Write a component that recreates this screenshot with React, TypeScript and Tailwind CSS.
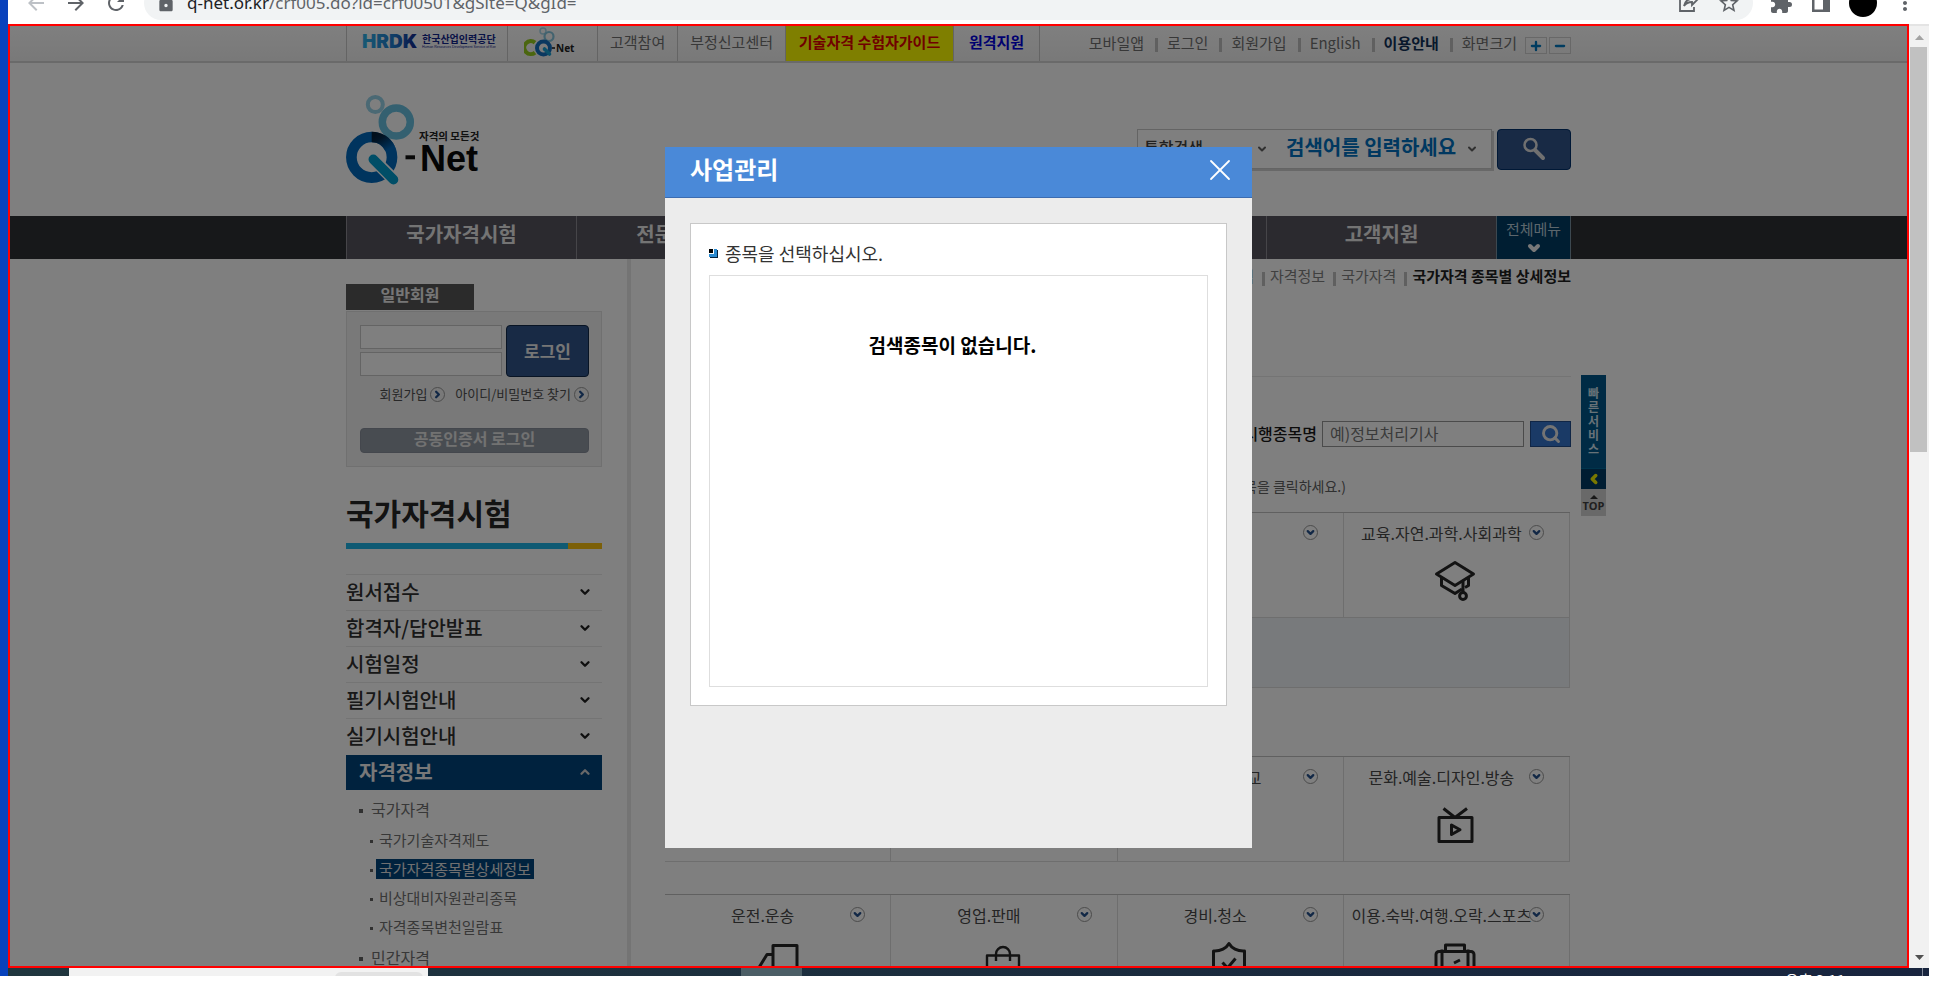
import type { ReactNode } from "react";
import { ChevronDown, ChevronLeft, ChevronRight, ChevronUp, Minus, Plus, Search, X } from "lucide-react";
import {
  MdArrowBack,
  MdArrowForward,
  MdExtension,
  MdLock,
  MdMoreVert,
  MdRefresh,
  MdStarBorder,
} from "react-icons/md";

const topMenu = ["고객참여", "부정신고센터"];
const utilLinks = ["모바일앱", "로그인", "회원가입", "English", "이용안내", "화면크기"];
const mainNav = ["국가자격시험", "전문자격시험", "과정평가형", "일학습병행", "고객지원"];
const sideMenu = ["원서접수", "합격자/답안발표", "시험일정", "필기시험안내", "실기시험안내"];
const subMenu = ["국가기술자격제도", "국가자격종목별상세정보", "비상대비자원관리종목", "자격종목변천일람표"];

function HrdkLogo() {
  return (
    <svg width="134" height="32" viewBox="0 0 134 32" role="img" aria-label="HRDK 한국산업인력공단">
      <defs>
        <linearGradient id="hrdk" x1="0" x2="1">
          <stop offset="0" stopColor="#2fb4ea" />
          <stop offset="0.6" stopColor="#1f78cc" />
          <stop offset="1" stopColor="#10248c" />
        </linearGradient>
      </defs>
      <text x="0" y="20" fontFamily="Inter" fontWeight="900" fontSize="19" fill="url(#hrdk)">
        HRDK
      </text>
      <text x="60" y="15" fontFamily="Noto Sans CJK KR" fontWeight="700" fontSize="10" fill="#10248c">
        한국산업인력공단
      </text>
      <text x="60" y="20" fontFamily="Liberation Sans" fontSize="3.5" fill="#10248c">
        Human Resources Development Service of Korea
      </text>
    </svg>
  );
}

function CqNetLogo() {
  return (
    <svg width="52" height="34" viewBox="0 0 52 34" role="img" aria-label="CQ-Net">
      <circle cx="19" cy="4" r="3" fill="none" stroke="#a8d6e8" strokeWidth="1.5" />
      <circle cx="25" cy="9.500" r="4.500" fill="none" stroke="#86c6de" strokeWidth="2.2" />
      <circle cx="19.500" cy="21" r="6.500" fill="none" stroke="#1470c0" strokeWidth="4" />
      <path d="M11 15.600A6.500 6.500 0 1 0 11 25.600" fill="none" stroke="#96cc1e" strokeWidth="4" />
      <path d="M20.500 22L25.500 27" stroke="#18a0d2" strokeWidth="3.6" strokeLinecap="round" />
      <path d="M28 21h3" stroke="#222" strokeWidth="1.6" />
      <text x="32" y="25" fontFamily="Noto Sans" fontWeight="700" fontSize="10" fill="#222">
        Net
      </text>
    </svg>
  );
}

function QNetLogo() {
  return (
    <svg width="136" height="92" viewBox="0 0 136 92" role="img" aria-label="자격의 모든것 Q-Net">
      <defs>
        <linearGradient id="q-shade" x1="0" x2="1" y1="0" y2="1">
          <stop offset="0" stopColor="#021e36" />
          <stop offset="0.3" stopColor="#02284a" />
          <stop offset="1" stopColor="#0068bc" />
        </linearGradient>
      </defs>
      <circle cx="29.300" cy="9.500" r="7.500" fill="none" stroke="#96d2e8" strokeWidth="4" />
      <circle cx="50.300" cy="27" r="14" fill="none" stroke="#68c0e0" strokeWidth="7.500" />
      <circle cx="25.700" cy="62.300" r="20.300" fill="none" stroke="#0068bc" strokeWidth="10.700" />
      <path d="M25.700 42A20.300 20.300 0 0 1 44 53.500" fill="none" stroke="url(#q-shade)" strokeWidth="10.700" />
      <path d="M27.300 64.300L48 84.700" stroke="#fff" strokeWidth="12.500" strokeLinecap="round" />
      <path d="M27.300 64.300L47.500 84.700" stroke="#009cce" strokeWidth="9.600" strokeLinecap="round" />
      <path d="M59.500 62.300h9.500" stroke="#111" strokeWidth="4" />
      <text x="73" y="45" fontFamily="Noto Sans CJK KR" fontWeight="700" fontSize="10.500" fill="#222">
        자격의 모든것
      </text>
      <text x="74" y="76" fontFamily="Liberation Sans" fontWeight="700" fontSize="36" fill="#080808">
        Net
      </text>
    </svg>
  );
}

function LineIcon({ children }: { children: ReactNode }) {
  return (
    <svg
      width="44"
      height="44"
      viewBox="0 0 44 44"
      fill="none"
      stroke="#262626"
      strokeWidth="3"
      strokeLinejoin="round"
      aria-hidden="true"
    >
      {children}
    </svg>
  );
}

const capIcon = (
  <LineIcon>
    <path d="M22 3.500L40.500 15 22 26.500 3.500 15z" />
    <path d="M8.500 18.500v8L22 34.500l7-4.500M35.500 18.500v8l-3.500 2" />
    <path d="M30 21v12.500" />
    <circle cx="30" cy="37" r="3.400" />
  </LineIcon>
);
const tvIcon = (
  <LineIcon>
    <path d="M6 14.500h33v24H6zM10.500 5.500L22 14.500 34 5.500M18.500 22v9.500l8.500-4.700z" />
  </LineIcon>
);
const truckIcon = (
  <LineIcon>
    <path d="M18 4.500h24v24H18zM18 13.500h-6l-8 13v12h13M42 28.500v9H24" />
  </LineIcon>
);
const bagIcon = (
  <LineIcon>
    <path d="M6 14.500h32v24H6zM15 20V13a7 7 0 0 1 14 0v7" strokeWidth="2.400" />
  </LineIcon>
);
const shieldIcon = (
  <LineIcon>
    <path d="M22 2.500c2.500 4.500 8.500 8 15.500 7.500v15c0 7-8 11-15.500 15C14.500 36 6.500 32 6.500 25V10C13.500 10.500 19.500 7 22 2.500zM15.500 21.500l5 5.500 8-9.500" />
  </LineIcon>
);
const caseIcon = (
  <LineIcon>
    <path d="M12.500 10V4h19v6M3 13.500a3 3 0 0 1 3-3h32a3 3 0 0 1 3 3v26H3zM9 8.500v31M35 8.500v31M21 22l6-3M18 30l5-4" />
  </LineIcon>
);

const groups: { items: { name: string; icon: ReactNode }[]; open?: boolean; className: string }[] = [
  {
    open: true,
    className: "mt-[15px]",
    items: [
      { name: "사업관리", icon: null },
      { name: "경영.회계", icon: null },
      { name: "금융.보험", icon: null },
      { name: "교육.자연.과학.사회과학", icon: capIcon },
    ],
  },
  {
    className: "mt-[68px]",
    items: [
      { name: "법률.국방", icon: null },
      { name: "보건.의료", icon: null },
      { name: "사회복지.종교", icon: null },
      { name: "문화.예술.디자인.방송", icon: tvIcon },
    ],
  },
  {
    className: "mt-8",
    items: [
      { name: "운전.운송", icon: truckIcon },
      { name: "영업.판매", icon: bagIcon },
      { name: "경비.청소", icon: shieldIcon },
      { name: "이용.숙박.여행.오락.스포츠", icon: caseIcon },
    ],
  },
];

function Bar() {
  return <span className="h-[14px] w-[3px] bg-[#c0c0c0]" aria-hidden="true" />;
}

function BrowserBar() {
  return (
    <div className="flex h-6 shrink-0 items-end gap-4 overflow-hidden bg-white pr-3 pb-1 pl-4 text-[#5f6368]">
      <button aria-label="뒤로" className="flex h-[34px] items-center text-[#bdc1c6]">
        <MdArrowBack size={24} />
      </button>
      <button aria-label="앞으로" className="flex h-[34px] items-center">
        <MdArrowForward size={24} />
      </button>
      <button aria-label="새로고침" className="flex h-[34px] items-center">
        <MdRefresh size={24} />
      </button>
      <div className="flex h-[34px] flex-1 items-center gap-[11px] rounded-full bg-[#f1f3f4] px-3">
        <MdLock size={20} />
        <span className="flex-1 font-['Noto_Sans'] text-[17px] leading-6 text-[#5f6368]">
          <span className="text-[#202124]">q-net.or.kr</span>/crf005.do?id=crf00501&amp;gSite=Q&amp;gId=
        </span>
        <button aria-label="공유" className="mr-[7px]">
          <svg width="22" height="22" viewBox="0 0 22 22" fill="none" stroke="currentColor" strokeWidth="1.800">
            <path d="M8 4H3v15h14v-4M7 14c1-5 4-7 8-7V3l5 5-5 5V10c-4 0-6 1-8 4z" />
          </svg>
        </button>
        <button aria-label="북마크">
          <MdStarBorder size={24} />
        </button>
      </div>
      <button aria-label="확장 프로그램" className="flex h-[34px] items-center">
        <MdExtension size={24} />
      </button>
      <button aria-label="사이드 패널" className="flex h-[34px] items-center">
        <svg width="24" height="24" viewBox="0 0 24 24" fill="currentColor">
          <path d="M3 3h18v18H3zM5.500 5.500v13H14v-13z" fillRule="evenodd" />
        </svg>
      </button>
      <span className="flex h-[34px] items-center">
        <span className="size-7 rounded-full bg-black" />
      </span>
      <button aria-label="메뉴" className="flex h-[34px] items-center">
        <MdMoreVert size={24} />
      </button>
    </div>
  );
}

function TopBar() {
  return (
    <div className="border-b-2 border-[#d4d4d4] bg-linear-to-b from-white to-[#f2f2f2] text-[15px] leading-5 text-[#707070]">
      <div className="mx-auto flex h-[35px] max-w-[1225px] items-stretch">
        <a href="#hrdk" className="flex w-[161px] items-center border-l border-[#c8c8c8] pl-[15px]">
          <HrdkLogo />
        </a>
        <a href="#cq" className="flex w-[90px] items-center border-l border-[#c8c8c8] pl-4">
          <CqNetLogo />
        </a>
        {topMenu.map((t) => (
          <a key={t} href="#menu" className="border-l border-[#c8c8c8] px-3 pt-1.5">
            {t}
          </a>
        ))}
        <a
          href="#guide"
          className="w-[168px] border-l border-[#c8c8c8] bg-[#ffff00] pt-1.5 text-center font-bold text-[#e00000]"
        >
          기술자격 수험자가이드
        </a>
        <a
          href="#remote"
          className="w-[87px] border-x border-[#c8c8c8] pt-1.5 text-center font-bold text-[#0000e0]"
        >
          원격지원
        </a>
        <div className="ml-auto flex items-center pb-0.5">
          {utilLinks.map((t, i) => (
            <span key={t} className="flex items-center">
              {i > 0 && (
                <span className="mt-1 mr-[9px] ml-[11px] flex">
                  <Bar />
                </span>
              )}
              <a href="#util" className={t === "이용안내" ? "font-bold text-[#103058]" : ""}>
                {t}
              </a>
            </span>
          ))}
          <button
            aria-label="크게"
            className="mt-1.5 ml-2 flex h-[17px] w-[22px] items-center justify-center border border-[#d0d0d0] text-[#0078c0]"
          >
            <Plus size={14} strokeWidth={4} />
          </button>
          <button
            aria-label="작게"
            className="mt-1.5 ml-0.5 flex h-[17px] w-[22px] items-center justify-center border border-[#d0d0d0] text-[#0078c0]"
          >
            <Minus size={14} strokeWidth={4} />
          </button>
        </div>
      </div>
    </div>
  );
}

function Header() {
  return (
    <header>
      <div className="mx-auto flex h-[153px] max-w-[1225px] justify-between">
        <a href="#home" className="pt-8">
          <QNetLogo />
        </a>
        <form className="flex gap-[5px] pt-[66px]">
          <div className="flex h-10 w-[355px] items-center border border-[#c8c8c8] shadow-[2px_2px_0_#d0d0d0]">
            <div className="relative flex w-[142px] items-center">
              <select
                aria-label="검색 구분"
                className="w-full appearance-none bg-transparent pb-1 pl-1.5 text-base leading-6 font-medium text-[#404040]"
              >
                <option>통합검색</option>
              </select>
              <ChevronDown size={12} strokeWidth={4} className="absolute top-2 right-3 text-[#606060]" />
            </div>
            <input
              aria-label="검색어"
              placeholder="검색어를 입력하세요"
              className="w-[184px] pb-1 pl-1.5 text-xl leading-7 font-bold placeholder:text-[#0070c0]"
            />
            <ChevronDown size={12} strokeWidth={4} className="ml-0.5 text-[#606060]" />
          </div>
          <button
            type="button"
            aria-label="검색"
            className="flex h-[41px] w-[74px] items-center justify-center rounded-sm border border-[#00306c] bg-[#30548a] pb-0.5 text-[#e0e0e0]"
          >
            <svg width="26" height="26" viewBox="0 0 26 26" fill="none" stroke="currentColor" strokeLinecap="round">
              <circle cx="9.500" cy="9" r="6" strokeWidth="2.500" />
              <path d="M14.500 14.500L22 22" strokeWidth="4" />
            </svg>
          </button>
        </form>
      </div>
      <nav className="bg-[#2e3034]">
        <div className="mx-auto flex h-[43px] max-w-[1225px]">
          {mainNav.map((t) => (
            <a
              key={t}
              href="#nav"
              className="w-[230px] border-l border-[#8c8a92] bg-[#56545f] pt-1 text-center text-xl leading-7 font-bold text-[#e8e8e8]"
            >
              {t}
            </a>
          ))}
          <button className="flex flex-1 flex-col items-center border-x border-[#7890a0] bg-[#003c64] pt-px text-[15px] leading-[23px] text-[#b8ccd8]">
            전체메뉴
            <ChevronDown size={16} strokeWidth={6} className="text-[#f0f0f0]" />
          </button>
        </div>
      </nav>
    </header>
  );
}

function RoundArrow({ down }: { down?: boolean }) {
  return (
    <span className="flex size-[15px] shrink-0 items-center justify-center rounded-full border border-[#989898] text-[#24508c]">
      {down ? <ChevronDown size={11} strokeWidth={5} /> : <ChevronRight size={11} strokeWidth={5} />}
    </span>
  );
}

function Sidebar() {
  return (
    <aside className="w-[285px] shrink-0 border-r-4 border-[#e8e8e8] pt-[25px] pr-[25px]">
      <h2 className="h-[26px] w-32 bg-[#565656] text-center text-base leading-5 font-bold text-[#ededed]">
        일반회원
      </h2>
      <form className="mt-px h-[156px] border border-[#e0e0e0] bg-[#f2f2f2] pt-[13px] pr-3 pl-[13px]">
        <div className="flex gap-1">
          <div className="flex flex-1 flex-col gap-[3px]">
            <input aria-label="아이디" className="h-6 w-full border border-[#c8c8c8] bg-white px-1" />
            <input
              aria-label="비밀번호"
              type="password"
              className="h-6 w-full border border-[#c8c8c8] bg-white px-1"
            />
          </div>
          <button
            type="button"
            className="h-[52px] w-[83px] rounded-sm border border-[#102848] bg-[#30548a] text-[17px] font-bold text-[#ededed]"
          >
            로그인
          </button>
        </div>
        <div className="mt-[7px] flex items-center justify-end gap-[10px] text-[13px] leading-5 text-[#505050]">
          <a href="#join" className="flex items-center gap-[3px]">
            회원가입 <RoundArrow />
          </a>
          <a href="#find" className="flex items-center gap-[3px]">
            아이디/비밀번호 찾기 <RoundArrow />
          </a>
        </div>
        <button
          type="button"
          className="mt-6 flex h-[25px] w-full justify-center rounded-sm border border-[#888f9a] bg-[#9098a2] text-base leading-[18px] font-bold text-[#e4e4e4]"
        >
          공동인증서 로그인
        </button>
      </form>
      <h1 className="mt-6 text-[30px] leading-[42px] font-bold text-[#262626]">국가자격시험</h1>
      <div className="mt-[10px] flex h-1.5 bg-[#1eb4e6]">
        <span className="ml-auto w-[34px] bg-[#f8c010]" />
      </div>
      <nav className="mt-[25px] text-xl leading-[33px] font-medium text-[#303030]">
        {sideMenu.map((t) => (
          <a
            key={t}
            href="#side"
            className="flex items-center justify-between border-t border-[#e8e8e8] pr-[10px] pb-0.5"
          >
            {t}
            <ChevronDown size={14} strokeWidth={4} className="text-[#202020]" />
          </a>
        ))}
        <a
          href="#info"
          className="mt-px flex items-center justify-between bg-[#00447c] pr-[10px] pb-0.5 pl-[13px] font-bold text-[#f0f0f0]"
        >
          자격정보
          <ChevronUp size={14} strokeWidth={4} className="text-[#d0d0d0]" />
        </a>
      </nav>
      <ul className="pt-[7px] pl-[13px] text-base leading-6 text-[#707070]">
        <li>
          <a href="#national" className="flex items-center gap-2">
            <span className="mt-1 size-1 bg-[#606060]" />
            국가자격
          </a>
          <ul className="mt-1 pl-[11px] text-[15px]">
            {subMenu.map((t, i) => (
              <li key={t} className="flex h-[29px] items-center gap-[3px]">
                <span className="mt-1 size-[3px] bg-[#606060]" />
                <a
                  href="#sub"
                  className={i === 1 ? "bg-[#00447c] px-[3px] leading-5 text-[#e0e0e0]" : "px-[3px] leading-5"}
                >
                  {t}
                </a>
              </li>
            ))}
          </ul>
        </li>
        <li className="mt-1">
          <a href="#private" className="flex items-center gap-2">
            <span className="mt-1 size-1 bg-[#606060]" />
            민간자격
          </a>
        </li>
      </ul>
    </aside>
  );
}

function Main() {
  return (
    <main className="min-w-0 flex-1 pl-[34px]">
      <div className="flex h-9 items-center justify-end pb-0.5 text-[15px] text-[#808080]">
        <a href="#c1">국가자격시험</a>
        <span className="mt-1.5 mr-[5px] ml-2 flex">
          <Bar />
        </span>
        <a href="#c2">자격정보</a>
        <span className="mt-1.5 mr-[5px] ml-2 flex">
          <Bar />
        </span>
        <a href="#c3">국가자격</a>
        <span className="mt-1.5 mr-[5px] ml-2 flex">
          <Bar />
        </span>
        <b className="font-bold text-[#202020]">국가자격 종목별 상세정보</b>
      </div>
      <form className="mt-[81px] flex items-center justify-end border-t border-[#e8e8e8] pt-11">
        <label htmlFor="item-name" className="mr-[5px] pb-0.5 text-base leading-6 font-medium text-[#181818]">
          시행종목명
        </label>
        <input
          id="item-name"
          placeholder="예)정보처리기사"
          className="mr-1.5 h-[26px] w-[202px] border border-[#969696] pb-0.5 pl-[7px] text-base placeholder:text-[#757575]"
        />
        <button
          type="button"
          aria-label="종목 검색"
          className="flex h-[26px] w-[41px] items-center justify-center border border-[#204c8c] bg-[#3474cc] text-[#e8e8e8]"
        >
          <Search size={20} strokeWidth={3.500} />
        </button>
      </form>
      <p className="mt-7 mb-px pr-[225px] text-right text-sm leading-[22px] text-[#606060]">(종목을 클릭하세요.)</p>
      {groups.map((g, gi) => (
        <section key={gi} className={g.className}>
          <ul className="mr-px grid grid-cols-4 border-t border-b border-t-[#c0c0c0] border-b-[#dcdcdc]">
            {g.items.map((c) => (
              <li key={c.name} className="border-r border-[#dcdcdc]">
                <button className="flex h-[104px] w-full flex-col items-center">
                  <span className="flex h-[39px] w-full items-center pr-[25px] pl-[10px]">
                    <span className="flex min-w-0 flex-1 justify-center text-base whitespace-nowrap text-[#484848]">
                      {c.name}
                    </span>
                    <RoundArrow down />
                  </span>
                  <span className="mt-[7px] flex h-11 pr-0.5">{c.icon}</span>
                </button>
              </li>
            ))}
          </ul>
          {g.open && <div className="mr-px h-[70px] border-r border-b border-[#dcdcdc] bg-[#f1f4f8]" />}
        </section>
      ))}
    </main>
  );
}

function QuickService() {
  return (
    <div className="absolute top-[116px] -right-[35px] w-[25px] text-center">
      <button className="flex h-[93px] w-full flex-col items-center gap-0.5 bg-[#00568a] pt-3 text-xs leading-3 font-bold text-[#d0e4f0]">
        {["빠", "른", "서", "비", "스"].map((c) => (
          <span key={c}>{c}</span>
        ))}
      </button>
      <button
        aria-label="펼치기"
        className="flex h-[21px] w-full items-center justify-center border-t border-[#006898] bg-[#003a64] text-[#f0f000]"
      >
        <ChevronLeft size={14} strokeWidth={6} />
      </button>
      <a
        href="#top"
        className="flex h-[27px] flex-col items-center bg-[#d2d2d2] pt-1.5 font-['Open_Sans'] text-[11px] leading-[14px] font-bold text-[#404040]"
      >
        <svg width="8" height="4" viewBox="0 0 8 4" aria-hidden="true">
          <path d="M4 0l4 4H0z" fill="#303030" />
        </svg>
        TOP
      </a>
    </div>
  );
}

function Modal() {
  return (
    <div
      role="dialog"
      aria-label="사업관리"
      className="flex h-[701px] w-[587px] flex-col bg-[#ececec] text-[#333]"
    >
      <div className="flex h-[51px] items-center justify-between border-b border-[#3c6cb0] bg-[#4a89d8] pr-[14px] pl-[25px] text-white">
        <h2 className="pb-[7px] text-2xl font-bold">사업관리</h2>
        <button aria-label="닫기" className="mb-1">
          <X size={36} strokeWidth={1.200} />
        </button>
      </div>
      <div className="mx-[25px] mt-[25px] flex h-[483px] flex-col border border-[#c8c8c8] bg-white px-[18px] pb-[18px]">
        <h3 className="flex h-[51px] items-center gap-[7px] pt-1.5 text-lg leading-6">
          <svg width="9" height="9" viewBox="0 0 9 9" className="mt-0.5" aria-hidden="true">
            <path d="M0 0h4v4H0z" fill="#000" />
            <path d="M5 0h3v8H0V5h5z" fill="#2a8ad0" />
            <path d="M8 1h1v8H1V8h7z" fill="#04213c" />
          </svg>
          종목을 선택하십시오.
        </h3>
        <div className="flex-1 border border-[#dedede] pt-[55px] pr-3 text-center text-[19px] leading-7 font-bold text-black">
          검색종목이 없습니다.
        </div>
      </div>
    </div>
  );
}

function Scrollbar() {
  return (
    <div className="flex w-5 shrink-0 flex-col items-center border-t-2 border-[#e4e4e4] bg-[#f1f1f1] pt-[9px] pb-2">
      <svg width="9" height="5" viewBox="0 0 9 5" aria-hidden="true">
        <path d="M4.500 0L9 5H0z" fill="#a3a3a3" />
      </svg>
      <div className="mt-[7px] mr-px h-[405px] w-[17px] bg-[#c1c1c1]" />
      <svg width="9" height="5" viewBox="0 0 9 5" className="mt-auto" aria-hidden="true">
        <path d="M4.500 5L9 0H0z" fill="#505050" />
      </svg>
    </div>
  );
}

function Taskbar() {
  return (
    <div className="flex h-2 shrink-0 overflow-hidden bg-linear-to-r from-[#20363e] to-[#18243e]">
      <div className="ml-[61px] w-[359px] bg-[#f2f2f2] pt-1">
        <div className="mr-[5px] ml-auto h-4 w-[88px] rounded-md bg-[#e2e2e2]" />
      </div>
      <div className="ml-[313px] w-[61px] bg-[#4c5e66]" />
      <div className="mr-[77px] ml-auto pt-0.5 text-[15px] leading-5 text-white">오후 3:11</div>
      <div className="mr-1.5 w-px bg-[#808898]" />
    </div>
  );
}

export default function App() {
  return (
    <div className="flex h-screen overflow-hidden bg-white pr-[9px] pb-4 font-['Noto_Sans_CJK_KR',sans-serif]">
      <div className="w-2 shrink-0 bg-[#0842bc]" />
      <div className="flex min-w-0 flex-1 flex-col">
        <BrowserBar />
        <div className="flex min-h-0 flex-1">
          <div className="relative min-w-0 flex-1 overflow-hidden border-2 border-[#ff0000] bg-white">
            <TopBar />
            <Header />
            <div className="relative mx-auto flex max-w-[1225px]">
              <Sidebar />
              <Main />
              <QuickService />
            </div>
            <div className="absolute inset-0 flex items-start justify-center bg-black/50 pt-[121px]">
              <Modal />
            </div>
          </div>
          <Scrollbar />
        </div>
        <Taskbar />
      </div>
    </div>
  );
}
